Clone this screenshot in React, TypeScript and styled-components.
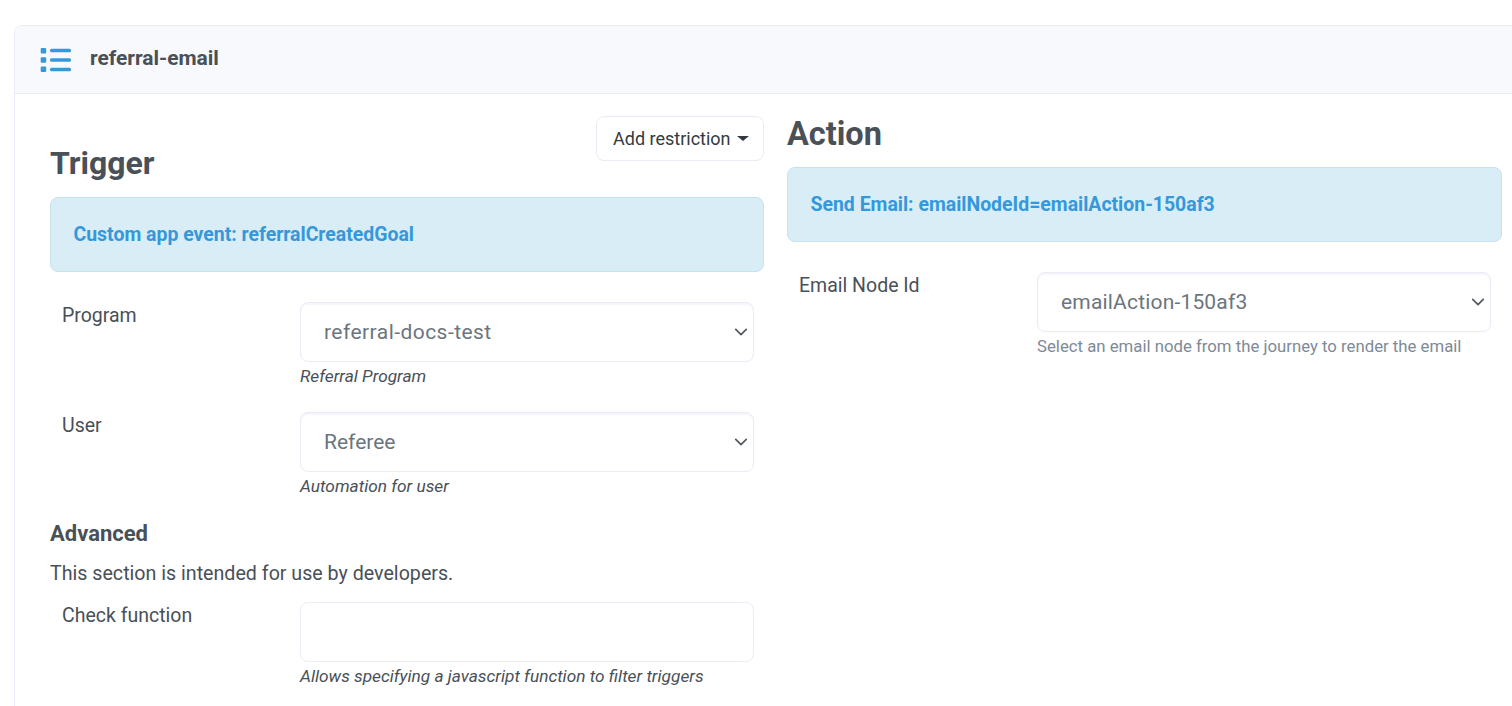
import React from 'react';
import styled, {createGlobalStyle} from "styled-components";

const chevron = "data:image/svg+xml,%3csvg xmlns='http://www.w3.org/2000/svg' viewBox='0 0 16 16'%3e%3cpath fill='none' stroke='%23555b61' stroke-linecap='round' stroke-linejoin='round' stroke-width='2' d='M2 5l6 6 6-6'/%3e%3c/svg%3e";

function App() {
    return (
        <Page>
            <GlobalStyle/>
            <Card>
                <CardHeader>
                    <ListIcon/>
                    <CardTitle>referral-email</CardTitle>
                </CardHeader>
                <CardBody>
                    <Column>
                        <RestrictionButton>Add restriction<Caret/></RestrictionButton>
                        <TriggerHeading>Trigger</TriggerHeading>
                        <Alert>Custom app event: referralCreatedGoal</Alert>
                        <FormRow>
                            <Label>Program</Label>
                            <div>
                                <Select defaultValue="referral-docs-test" $spacing={0.45}>
                                    <option>referral-docs-test</option>
                                </Select>
                                <Hint>Referral Program</Hint>
                            </div>
                        </FormRow>
                        <FormRow>
                            <Label>User</Label>
                            <div>
                                <Select defaultValue="Referee" $spacing={0}>
                                    <option>Referee</option>
                                </Select>
                                <Hint>Automation for user</Hint>
                            </div>
                        </FormRow>
                        <SubHeading>Advanced</SubHeading>
                        <Paragraph>This section is intended for use by developers.</Paragraph>
                        <FormRow>
                            <Label>Check function</Label>
                            <div>
                                <TextInput type="text"/>
                                <Hint>Allows specifying a javascript function to filter triggers</Hint>
                            </div>
                        </FormRow>
                    </Column>
                    <Column>
                        <ActionHeading>Action</ActionHeading>
                        <Alert>Send Email: emailNodeId=emailAction-150af3</Alert>
                        <FormRow>
                            <Label>Email Node Id</Label>
                            <div>
                                <Select defaultValue="emailAction-150af3" $spacing={0.18}>
                                    <option>emailAction-150af3</option>
                                </Select>
                                <MutedHint>Select an email node from the journey to render the email</MutedHint>
                            </div>
                        </FormRow>
                    </Column>
                </CardBody>
            </Card>
        </Page>
    )
}

function ListIcon() {
    return (
        <svg width="32" height="26" viewBox="0 0 32 26" fill="#3498db">
            <rect x="0.7" y="1" width="5.5" height="5.5" rx="1"/>
            <rect x="0.7" y="10.2" width="5.5" height="5.5" rx="1"/>
            <rect x="0.7" y="19.5" width="5.5" height="5.5" rx="1"/>
            <rect x="10" y="1.7" width="21" height="3.6" rx="1.5"/>
            <rect x="10" y="11.2" width="21" height="3.6" rx="1.5"/>
            <rect x="10" y="20.7" width="21" height="3.6" rx="1.5"/>
        </svg>
    )
}

export default App;

const GlobalStyle = createGlobalStyle`
    html, body {
        margin: 0;
        padding: 0;
        background: #fff;
        overflow: hidden;
    }
    body {
        font-family: Roboto, "Liberation Sans", sans-serif;
        font-size: 19.5px;
        line-height: 1.5;
        color: #495057;
    }
`
const Page = styled.div`
    width: 1512px;
    height: 706px;
    overflow: hidden;
    padding: 25px 0 0 14px;
    box-sizing: border-box;
`
const Card = styled.div`
    width: 1560px;
    height: 760px;
    border: 1px solid #e9ecf6;
    border-radius: 8px;
    box-sizing: border-box;
`
const CardHeader = styled.div`
    display: flex;
    align-items: center;
    gap: 18px;
    height: 68px;
    padding: 0 25px;
    box-sizing: border-box;
    background: #f8f9fc;
    border-bottom: 1px solid #e9ecf6;
    border-radius: 8px 8px 0 0;
`
const CardTitle = styled.h5`
    margin: -2px 0 0;
    font-size: 20.9px;
    font-weight: 700;
    color: #495057;
`
const CardBody = styled.div`
    display: grid;
    grid-template-columns: 714px 715px;
    column-gap: 23px;
    padding: 22px 0 0 35px;
`
const Column = styled.div`
    display: flow-root;
`
const RestrictionButton = styled.button`
    float: right;
    display: flex;
    align-items: center;
    width: 168px;
    height: 45px;
    padding: 0 0 0 16px;
    box-sizing: border-box;
    font-family: inherit;
    font-size: 18px;
    color: #343a40;
    background: #fff;
    border: 1px solid #e9ecf6;
    border-radius: 8px;
`
const Caret = styled.span`
    margin-left: 6px;
    border-top: 5px solid #343a40;
    border-left: 6px solid transparent;
    border-right: 6px solid transparent;
`
const TriggerHeading = styled.h2`
    margin: 0;
    padding-top: 28px;
    height: 65px;
    box-sizing: border-box;
    font-size: 32px;
    line-height: 38px;
    font-weight: 700;
    color: #495057;
`
const ActionHeading = styled(TriggerHeading)`
    padding-top: 0;
    height: 36px;
    margin-top: -1px;
    font-size: 32.5px;
`
const Alert = styled.div`
    margin: 16px 0 30px;
    padding: 23px 22.5px;
    height: 75px;
    box-sizing: border-box;
    font-size: 19.45px;
    line-height: 27px;
    font-weight: 700;
    color: #3498db;
    background: #d8edf6;
    border: 1px solid #c4e3ef;
    border-radius: 8px;
`
const FormRow = styled.div`
    display: grid;
    grid-template-columns: 238px 454px;
    padding: 0 10px 0 12px;
`
const Label = styled.label`
    line-height: 28px;
`
const Select = styled.select<{$spacing: number}>`
    display: block;
    width: 100%;
    height: 60px;
    padding: 0 40px 0 23px;
    box-sizing: border-box;
    font-family: inherit;
    font-size: 21px;
    letter-spacing: ${p => p.$spacing}px;
    color: #6c757d;
    background: #fff url("${chevron}") no-repeat right 5px center / 14px 14px;
    border: 1px solid #e9ecf6;
    border-radius: 8px;
    box-shadow: inset 0 2px 1px rgba(100, 90, 200, 0.06);
    appearance: none;
`
const TextInput = styled.input`
    display: block;
    width: 100%;
    height: 60px;
    box-sizing: border-box;
    background: #fff;
    border: 1px solid #e9ecf6;
    border-radius: 8px;
`
const Hint = styled.div`
    height: 50px;
    padding-top: 2px;
    box-sizing: border-box;
    font-size: 17.25px;
    line-height: 24px;
    font-style: italic;
`
const MutedHint = styled(Hint)`
    font-size: 16.75px;
    font-style: normal;
    color: #7e8a97;
`
const SubHeading = styled.h5`
    margin: -3px 0 0;
    font-size: 22px;
    line-height: 30px;
    font-weight: 700;
`
const Paragraph = styled.p`
    margin: 10px 0 0;
    font-size: 19.65px;
    line-height: 30px;
    height: 43px;
`
